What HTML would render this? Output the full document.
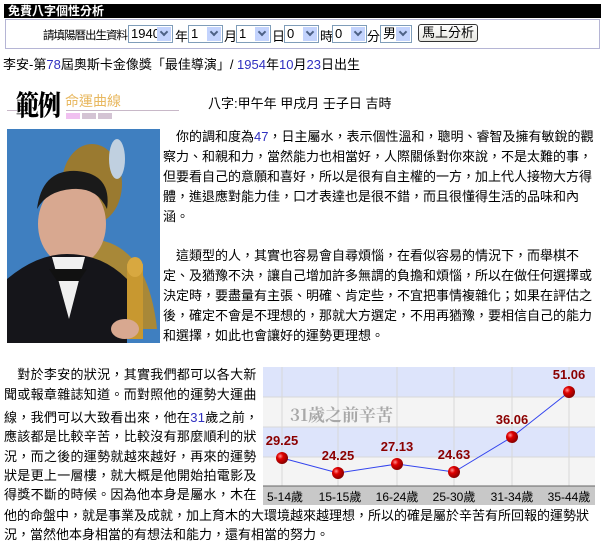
<!DOCTYPE html>
<html><head><meta charset="utf-8"><style>
body{margin:0;width:601px;height:544px;background:#fff;position:relative;overflow:hidden;font-family:"Liberation Sans","Noto Sans CJK TC","WenQuanYi Zen Hei",sans-serif;font-size:13px;color:#000}
.a{position:absolute;white-space:nowrap}
.sel{position:absolute;top:25px;height:18px;border:1px solid #7f9db9;background:#fff;font-size:13px;line-height:16px;padding-left:2px;box-sizing:border-box}
.sel i{position:absolute;right:1px;top:1px;width:14px;height:14px;background:#c3d3fd}
.sel i:after{content:"";position:absolute;left:4px;top:2px;width:4px;height:4px;border-right:2px solid #4d6185;border-bottom:2px solid #4d6185;transform:rotate(45deg)}
.t{position:absolute;white-space:nowrap;font-size:13px;line-height:20px}
.l{letter-spacing:0.3px}
.b{color:#3030c0}
</style></head><body>
<div class="a" style="left:4px;top:4px;width:597px;height:14px;background:#000;color:#fff;font-weight:bold;font-size:12px;line-height:14px;padding-left:4px;box-sizing:border-box">免費八字個性分析</div>
<div class="a" style="left:5px;top:19px;width:595px;height:30px;border:1px solid #b5b5d5;box-sizing:border-box"></div>
<div class="a" style="left:43px;top:27px;font-size:11.5px;letter-spacing:-1px">請填陽曆出生資料：</div>
<div class="sel" style="left:128px;width:45px">1940<i></i></div><div class="a" style="left:175px;top:26px">年</div>
<div class="sel" style="left:188px;width:35px">1<i></i></div><div class="a" style="left:224px;top:26px">月</div>
<div class="sel" style="left:236px;width:35px">1<i></i></div><div class="a" style="left:272px;top:26px">日</div>
<div class="sel" style="left:284px;width:35px">0<i></i></div><div class="a" style="left:320px;top:26px">時</div>
<div class="sel" style="left:332px;width:35px">0<i></i></div><div class="a" style="left:367px;top:26px">分</div>
<div class="sel" style="left:380px;width:32px">男<i></i></div>
<div class="a" style="left:418px;top:24px;width:60px;height:18px;border:1px solid #333;border-radius:3px;background:linear-gradient(#fff,#e6e6e0);box-sizing:border-box;text-align:center;line-height:15px;font-size:13px">馬上分析</div>

<div class="a" style="left:3px;top:54px;font-size:13px">李安-第<span class="b">78</span>屆奧斯卡金像獎「最佳導演」/ <span class="b">1954</span>年<span class="b">10</span>月<span class="b">23</span>日出生</div>

<div class="a" style="left:7px;top:110px;width:10px;height:1px;background:#c8b8c8"></div>
<div class="a" style="left:66px;top:110px;width:113px;height:1px;background:#c8b8c8"></div>
<div class="a" style="left:16px;top:88px;font-family:'Noto Serif CJK SC','Liberation Serif',serif;font-weight:900;font-size:23px;line-height:32px;letter-spacing:-1px;transform:scaleY(1.2);transform-origin:0 50%">範例</div>
<div class="a" style="left:65px;top:92px;color:#e8b860;font-size:14px;line-height:18px">命運曲線</div>
<div class="a" style="left:66px;top:113px;width:14px;height:6px;background:#f0c0f0"></div>
<div class="a" style="left:82px;top:113px;width:14px;height:6px;background:#d4c4d4"></div>
<div class="a" style="left:98px;top:113px;width:14px;height:6px;background:#d4c4d4"></div>
<div class="a" style="left:208px;top:93px">八字:甲午年 甲戌月 壬子日 吉時</div>

<svg class="a" style="left:7px;top:129px" width="153" height="214" viewBox="0 0 153 214">
<rect width="153" height="214" fill="#3f7fc0"/>
<ellipse cx="85" cy="55" rx="30" ry="40" fill="#9a7a30"/>
<path d="M20 200 Q30 110 80 110 Q140 110 150 200Z" fill="#a88838"/>
<ellipse cx="110" cy="30" rx="8" ry="20" fill="#c0d0e0"/>
<ellipse cx="65" cy="95" rx="34" ry="42" fill="#d8a890"/>
<path d="M30 80 Q35 40 70 42 Q105 45 100 80 Q90 58 65 60 Q40 62 30 80Z" fill="#1a1a1a"/>
<path d="M0 214 L0 150 Q30 125 60 125 Q95 125 120 150 L120 214Z" fill="#15151a"/>
<path d="M45 128 L62 190 L78 128Z" fill="#f0f0f0"/>
<path d="M42 140 L80 140 L72 152 L50 152Z" fill="#111"/>
<rect x="120" y="135" width="16" height="75" fill="#c89830"/>
<ellipse cx="128" cy="138" rx="8" ry="10" fill="#d8a840"/>
<ellipse cx="118" cy="200" rx="14" ry="10" fill="#d8a890"/>
</svg>

<div class="t" style="left:163px;top:127px">　你的調和度為<span class="b">47</span>，日主屬水，表示個性溫和，聰明、睿智及擁有敏銳的觀</div>
<div class="t" style="left:163px;top:147px">察力、和親和力，當然能力也相當好，人際關係對你來說，不是太難的事，</div>
<div class="t" style="left:163px;top:167px">但要看自己的意願和喜好，所以是很有自主權的一方，加上代人接物大方得</div>
<div class="t" style="left:163px;top:187px">體，進退應對能力佳，口才表達也是很不錯，而且很懂得生活的品味和內</div>
<div class="t" style="left:163px;top:207px">涵。</div>
<div class="t" style="left:163px;top:246px">　這類型的人，其實也容易會自尋煩惱，在看似容易的情況下，而舉棋不</div>
<div class="t" style="left:163px;top:266px">定、及猶豫不決，讓自己增加許多無謂的負擔和煩惱，所以在做任何選擇或</div>
<div class="t" style="left:163px;top:286px">決定時，要盡量有主張、明確、肯定些，不宜把事情複雜化；如果在評估之</div>
<div class="t" style="left:163px;top:306px">後，確定不會是不理想的，那就大方選定，不用再猶豫，要相信自己的能力</div>
<div class="t" style="left:163px;top:326px">和選擇，如此也會讓好的運勢更理想。</div>

<div class="t l" style="left:4px;top:365px">　對於李安的狀況，其實我們都可以各大新</div>
<div class="t l" style="left:4px;top:385px">聞或報章雜誌知道。而對照他的運勢大運曲</div>
<div class="t l" style="left:4px;top:408px">線，我們可以大致看出來，他在<span class="b">31</span>歲之前，</div>
<div class="t l" style="left:4px;top:427px">應該都是比較辛苦，比較沒有那麼順利的狀</div>
<div class="t l" style="left:4px;top:447px">況，而之後的運勢就越來越好，再來的運勢</div>
<div class="t l" style="left:4px;top:466px">狀是更上一層樓，就大概是他開始拍電影及</div>
<div class="t l" style="left:4px;top:485px">得獎不斷的時候。因為他本身是屬水，木在</div>
<div class="t" style="left:4px;top:506px">他的命盤中，就是事業及成就，加上育木的大環境越來越理想，所以的確是屬於辛苦有所回報的運勢狀</div>
<div class="t" style="left:4px;top:525px">況，當然他本身相當的有想法和能力，還有相當的努力。</div>

<svg class="a" style="left:263px;top:367px" width="332" height="140" viewBox="0 0 332 140">
<rect x="0" y="0" width="332" height="30" fill="#dde4fb"/>
<rect x="0" y="30" width="332" height="30" fill="#f4f4f4"/>
<rect x="0" y="60" width="332" height="30" fill="#dde4fb"/>
<rect x="0" y="90" width="332" height="29" fill="#f4f4f4"/>
<g stroke="#d8d8d8" stroke-width="1">
<line x1="19" y1="0" x2="19" y2="119"/><line x1="75" y1="0" x2="75" y2="119"/><line x1="134" y1="0" x2="134" y2="119"/><line x1="191" y1="0" x2="191" y2="119"/><line x1="249" y1="0" x2="249" y2="119"/><line x1="306" y1="0" x2="306" y2="119"/>
<line x1="0" y1="30" x2="332" y2="30"/><line x1="0" y1="60" x2="332" y2="60"/><line x1="0" y1="90" x2="332" y2="90"/>
</g>
<rect x="0" y="119" width="332" height="19" fill="#c8c8c8"/>
<line x1="0" y1="119" x2="332" y2="119" stroke="#666"/>
<text x="27" y="54" font-family="Noto Serif CJK SC,Liberation Serif,serif" font-weight="bold" font-size="17" fill="#a8a8a8">31歲之前辛苦</text>
<polyline points="19,91 75,106 134,97 191,105 249,70 306,25" fill="none" stroke="#3344ee" stroke-width="1"/>
<defs><radialGradient id="g" cx=".35" cy=".35" r=".7"><stop offset="0" stop-color="#ff9090"/><stop offset=".35" stop-color="#e00000"/><stop offset="1" stop-color="#800000"/></radialGradient></defs>
<g fill="url(#g)"><circle cx="19" cy="91" r="6"/><circle cx="75" cy="106" r="6"/><circle cx="134" cy="97" r="6"/><circle cx="191" cy="105" r="6"/><circle cx="249" cy="70" r="6"/><circle cx="306" cy="25" r="6"/></g>
<g font-family="Liberation Sans,sans-serif" font-weight="bold" font-size="13" fill="#8b0000" text-anchor="middle">
<text x="19" y="78">29.25</text><text x="75" y="93">24.25</text><text x="134" y="84">27.13</text><text x="191" y="92">24.63</text><text x="249" y="57">36.06</text><text x="306" y="12">51.06</text></g>
<g font-family="Liberation Sans,Noto Sans CJK TC,sans-serif" font-size="12" fill="#000" text-anchor="middle">
<text x="22" y="134">5-14歲</text><text x="77" y="134">15-15歲</text><text x="134" y="134">16-24歲</text><text x="191" y="134">25-30歲</text><text x="249" y="134">31-34歲</text><text x="306" y="134">35-44歲</text></g>
</svg>
</body></html>
